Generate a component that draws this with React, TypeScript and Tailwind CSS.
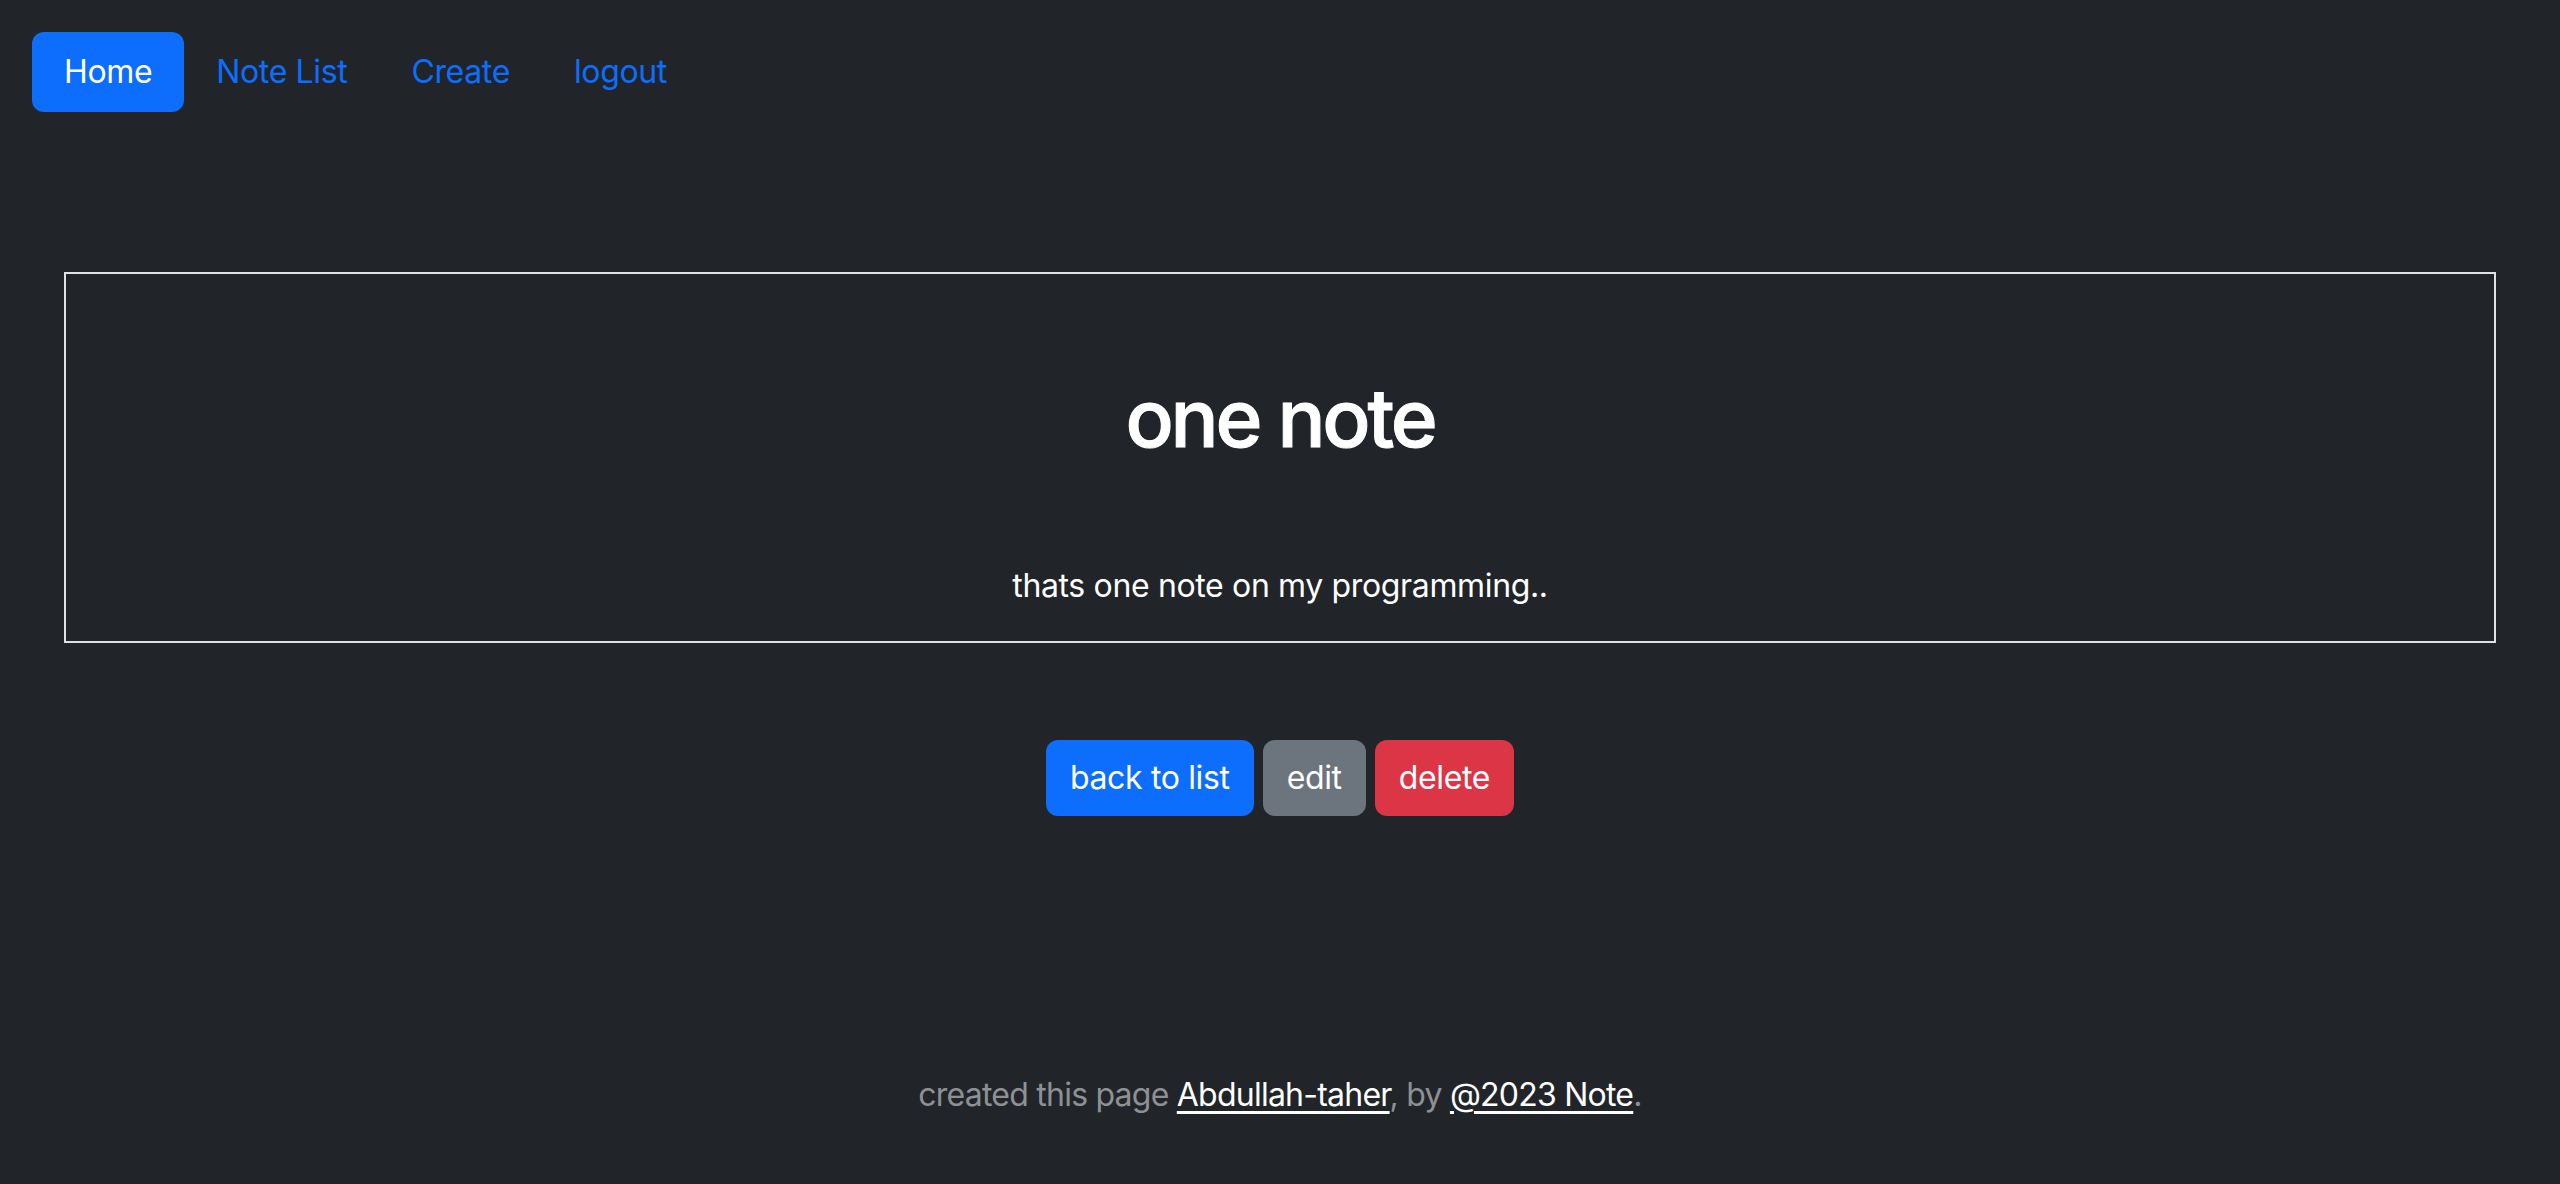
const navLinks = ["Note List", "Create", "logout"];

export default function App() {
  return (
    <div
      className="min-h-[1184px] bg-[#212529] text-white flex flex-col tracking-[-0.022em]"
      style={{ fontFamily: "Inter, 'Noto Sans', sans-serif" }}
    >
      {/* Nav pills */}
      <nav className="pt-[32px] pl-[32px]">
        <ul className="flex items-center">
          <li>
            <a className="block h-[80px] px-[32px] leading-[80px] text-[32px] rounded-[12px] bg-[#0d6efd] text-white">
              Home
            </a>
          </li>
          {navLinks.map((link) => (
            <li key={link}>
              <a className="block h-[80px] px-[32px] leading-[80px] text-[32px] text-[#0d6efd]">
                {link}
              </a>
            </li>
          ))}
        </ul>
      </nav>

      {/* Note card */}
      <section className="mx-[64px] mt-[160px] border-2 border-[#dee2e6] pt-[96px] pb-[31px] text-center">
        <h1 className="text-[80px] leading-[96px] font-medium tracking-[-0.04em] [-webkit-text-stroke:1px_white]">
          one note
        </h1>
        <p className="mt-[96px] text-[32px] leading-[48px]">thats one note on my programming..</p>
      </section>

      {/* Actions */}
      <div className="mt-[97px] flex justify-center gap-[9px]">
        <button className="h-[76px] px-[24px] text-[32px] rounded-[12px] bg-[#0d6efd] text-white">
          back to list
        </button>
        <button className="h-[76px] px-[24px] text-[32px] rounded-[12px] bg-[#6c757d] text-white">
          edit
        </button>
        <button className="h-[76px] px-[24px] text-[32px] rounded-[12px] bg-[#dc3545] text-white">
          delete
        </button>
      </div>

      {/* Footer */}
      <footer className="mt-[255px] text-center text-[32px] leading-[48px] tracking-[-0.024em] text-[#8e9194]">
        created this page{" "}
        <a className="text-white underline underline-offset-[5px]">Abdullah-taher</a>, by{" "}
        <a className="text-white underline underline-offset-[5px]">@2023 Note</a>.
      </footer>
    </div>
  );
}
